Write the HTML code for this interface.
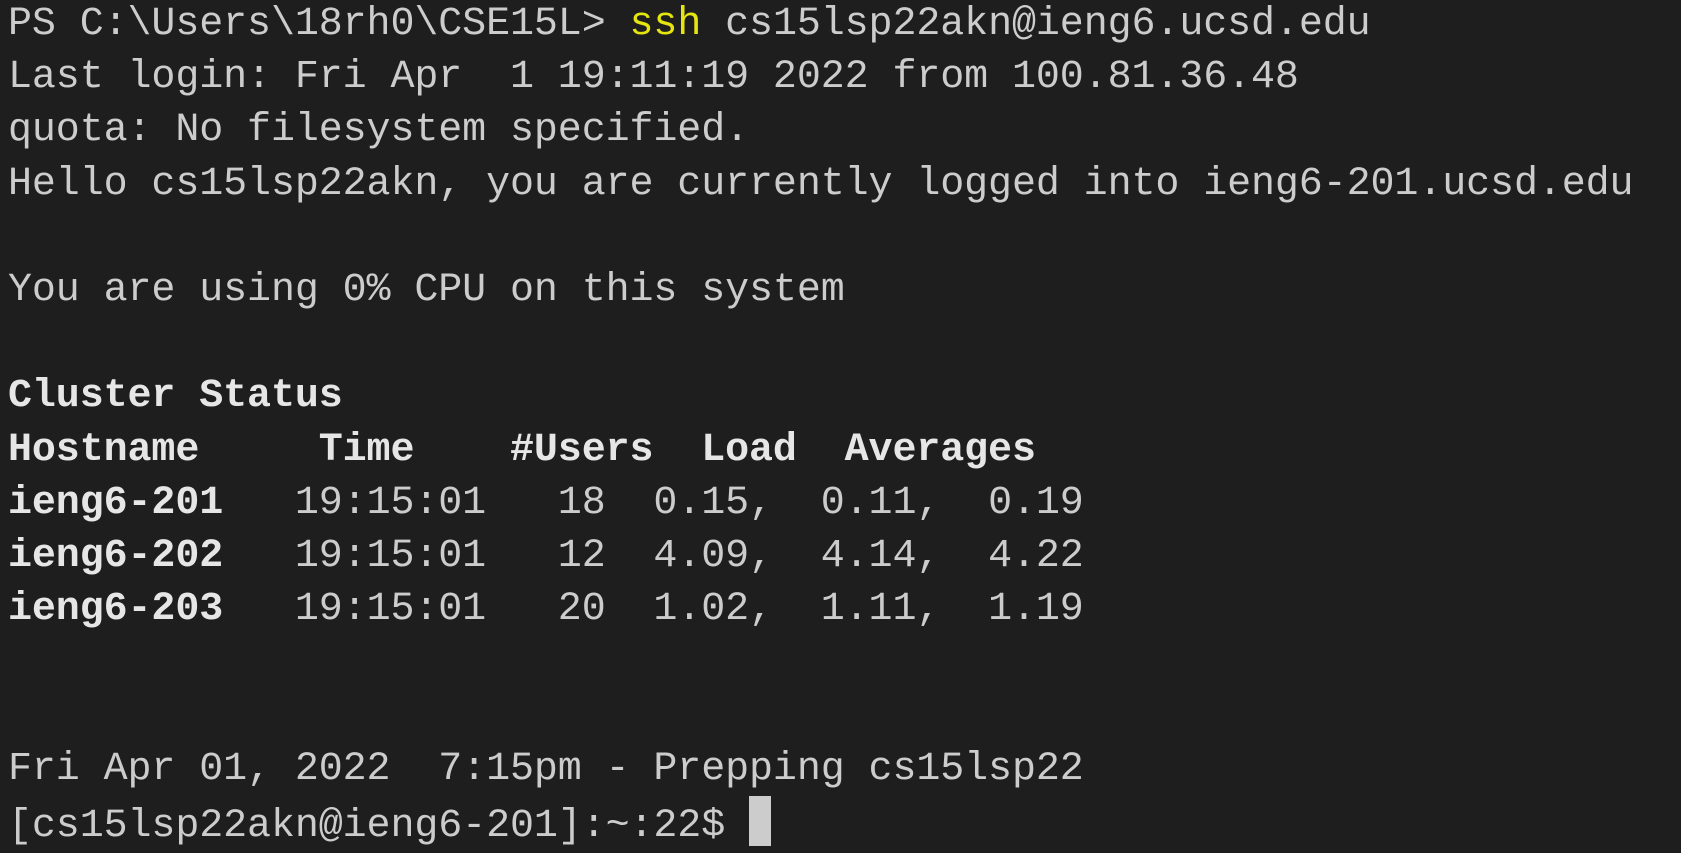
<!DOCTYPE html>
<html><head><meta charset="utf-8"><style>
html,body{margin:0;padding:0;background:#1e1e1e;width:1681px;height:848px;overflow:hidden;}
pre{margin:0;position:absolute;left:8px;top:-2px;font-family:"Liberation Mono","DejaVu Sans Mono",monospace;font-size:40px;line-height:53.2px;color:#cccccc;white-space:pre;letter-spacing:-0.1px;}
b{font-weight:bold;color:#e6e6e6}
.y{color:#e5e510}
.cur{display:inline-block;width:22px;height:50px;background:#cccccc;vertical-align:-10px;}
</style></head><body>
<pre>PS C:\Users\18rh0\CSE15L&gt; <span class="y">ssh</span> cs15lsp22akn@ieng6.ucsd.edu
Last login: Fri Apr  1 19:11:19 2022 from 100.81.36.48
quota: No filesystem specified.
Hello cs15lsp22akn, you are currently logged into ieng6-201.ucsd.edu

You are using 0% CPU on this system

<b>Cluster Status</b>
<b>Hostname     Time    #Users  Load  Averages</b>
<b>ieng6-201</b>   19:15:01   18  0.15,  0.11,  0.19
<b>ieng6-202</b>   19:15:01   12  4.09,  4.14,  4.22
<b>ieng6-203</b>   19:15:01   20  1.02,  1.11,  1.19


Fri Apr 01, 2022  7:15pm - Prepping cs15lsp22
[cs15lsp22akn@ieng6-201]:~:22$ <span class="cur"></span></pre>
</body></html>
